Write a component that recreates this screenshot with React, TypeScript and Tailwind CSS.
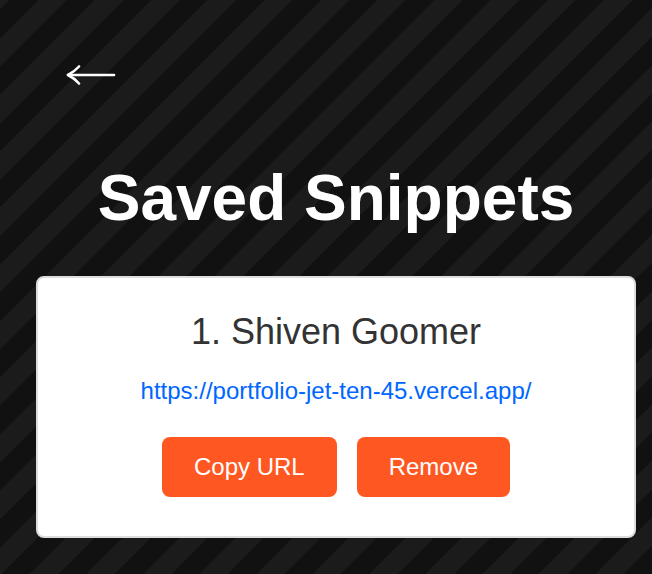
const snippets = [
  { name: 'Shiven Goomer', url: 'https://portfolio-jet-ten-45.vercel.app/' },
];

function BackArrow() {
  return (
    <svg width="50" height="20" viewBox="0 0 50 20" fill="none" className="block">
      <path d="M2 10 H48" stroke="#fff" strokeWidth="2.6" strokeLinecap="round" />
      <path d="M13 1.5 Q8 7 2 10 Q8 13 13 18.5" stroke="#fff" strokeWidth="2.6" strokeLinecap="round" strokeLinejoin="round" />
    </svg>
  );
}

export default function App() {
  return (
    <div className="min-h-screen bg-[repeating-linear-gradient(135deg,#1b1b1b_0,#1b1b1b_7px,#111111_7px,#111111_27px,#1b1b1b_27px,#1b1b1b_40px)] pl-5 pt-[65px] pb-10 font-['Liberation_Sans',Arial,sans-serif] leading-[normal]">
      {/* back button */}
      <button className="ml-[46px] block cursor-pointer">
        <BackArrow />
      </button>

      <div className="flex flex-col items-center">
        <h1 className="mt-[76px] text-[64px] leading-[normal] font-bold text-white">Saved Snippets</h1>

        <div className="mt-[41px] flex flex-col gap-0">
          {snippets.map((s, i) => (
            <div
              key={i}
              className="flex w-[600px] flex-col items-center rounded-lg border-2 border-[#dddddd] bg-white pt-[33px] pb-[39px]"
            >
              <h3 className="text-[36px] leading-[normal] text-[#333333]">
                {i + 1}. {s.name}
              </h3>
              <a href={s.url} className="mt-[24px] text-[24px] leading-[normal] text-[#0066ff]">
                {s.url}
              </a>
              <div className="mt-8 flex gap-5">
                <button className="rounded-lg bg-[#ff5722] px-8 py-4 text-[24px] leading-[normal] text-white">Copy URL</button>
                <button className="rounded-lg bg-[#ff5722] px-8 py-4 text-[24px] leading-[normal] text-white">Remove</button>
              </div>
            </div>
          ))}
        </div>
      </div>
    </div>
  );
}
